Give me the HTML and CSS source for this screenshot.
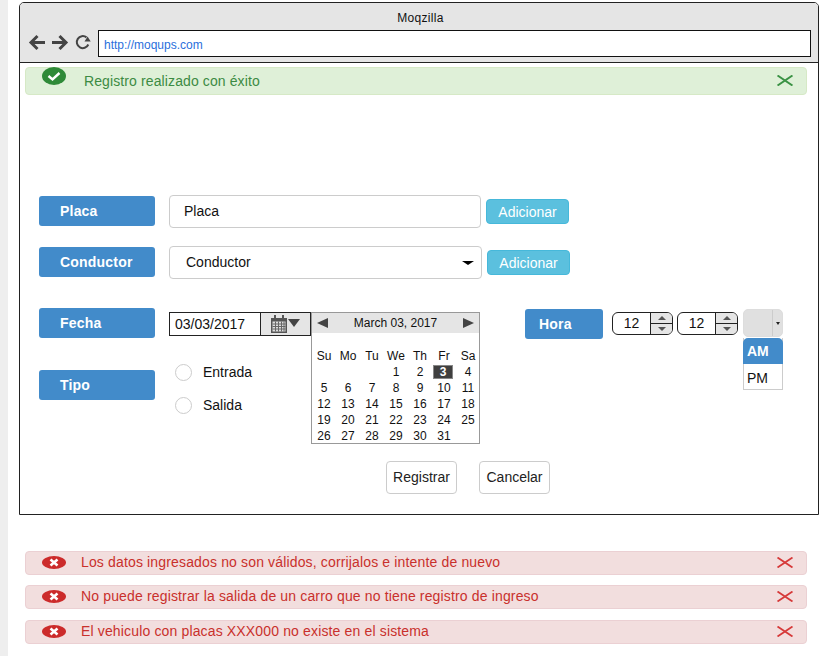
FILE: index.html
```html
<!DOCTYPE html>
<html lang="en">

<head>
    <meta charset="UTF-8">
    <meta name="viewport" content="width=device-width, initial-scale=1.0">
    <title>Moqzilla</title>
    <link rel="stylesheet" href="styles.css">
</head>

<body>
    <div class="window">
        <div class="chrome">
            <div class="chrome-title">Moqzilla</div>
            <div class="chrome-nav">
                <svg class="nav-icon" width="17" height="17" viewBox="0 0 17 17"><path d="M17 8.5H3M9.5 2L3 8.5 9.5 15" fill="none" stroke="#444" stroke-width="3"/></svg>
                <svg class="nav-icon" width="17" height="17" viewBox="0 0 17 17"><path d="M0 8.5h14M7.5 2L14 8.5 7.5 15" fill="none" stroke="#444" stroke-width="3"/></svg>
                <svg class="nav-icon nav-reload" width="16" height="16" viewBox="0 0 16 16"><path d="M13.3 10.5A6 6 0 1 1 11.5 3.4" fill="none" stroke="#444" stroke-width="2"/><path d="M9.5 7.5h6.2L12.6 2.6z" fill="#444"/></svg>
                <div class="address">http://moqups.com</div>
            </div>
        </div>

        <div class="alert alert-success alert-top">
            <svg class="alert-icon icon-up" width="24" height="18" viewBox="0 0 24 18"><ellipse cx="12" cy="9" rx="12" ry="9" fill="#2f8a38"/><path d="M6.5 9l4 3.5 7-6.5" fill="none" stroke="#fff" stroke-width="2.4"/></svg>
            <span class="alert-text success-text">Registro realizado con éxito</span>
            <svg class="alert-close" width="16" height="11" viewBox="0 0 16 11"><path d="M0.5 0.5l15 10M15.5 0.5l-15 10" stroke="#3a9244" stroke-width="2"/></svg>
        </div>

        <div class="form-row row-placa">
            <div class="tag">Placa</div>
            <div class="field">Placa</div>
            <button class="btn-add">Adicionar</button>
        </div>
        <div class="form-row row-conductor">
            <div class="tag">Conductor</div>
            <div class="field field-select">Conductor<span class="caret"></span></div>
            <button class="btn-add">Adicionar</button>
        </div>

        <div class="schedule">
            <div class="schedule-left">
                <div class="fecha-row">
                    <div class="tag">Fecha</div>
                    <div class="date-input">
                        <span class="date-value">03/03/2017</span>
                        <span class="date-btn">
                            <svg width="16" height="18" viewBox="0 0 16 18"><path d="M0 3h16v15H0z" fill="#555"/><path d="M1.5 6.5h13v10h-13z" fill="#ddd"/><path d="M4 0v5M12 0v5" stroke="#555" stroke-width="2"/><path d="M1.5 9h13M1.5 11.5h13M1.5 14h13M4.5 6.5v10M7.5 6.5v10M10.5 6.5v10M13 6.5v10" stroke="#666"/></svg>
                            <span class="tri-down"></span>
                        </span>
                    </div>
                </div>
                <div class="tipo-row">
                    <div class="tag tipo-tag">Tipo</div>
                    <div class="radios">
                        <label class="radio"><span class="radio-dot"></span>Entrada</label>
                        <label class="radio"><span class="radio-dot"></span>Salida</label>
                    </div>
                </div>
            </div>

            <div class="calendar">
                <div class="cal-head">
                    <span class="cal-prev"></span>
                    <span>March 03, 2017</span>
                    <span class="cal-next"></span>
                </div>
                <div class="cal-grid">
                    <span>Su</span><span>Mo</span><span>Tu</span><span>We</span><span>Th</span><span>Fr</span><span>Sa</span>
                    <span></span><span></span><span></span><span>1</span><span>2</span><span class="cal-today">3</span><span>4</span>
                    <span>5</span><span>6</span><span>7</span><span>8</span><span>9</span><span>10</span><span>11</span>
                    <span>12</span><span>13</span><span>14</span><span>15</span><span>16</span><span>17</span><span>18</span>
                    <span>19</span><span>20</span><span>21</span><span>22</span><span>23</span><span>24</span><span>25</span>
                    <span>26</span><span>27</span><span>28</span><span>29</span><span>30</span><span>31</span><span></span>
                </div>
            </div>

            <div class="hora">
                <div class="tag tag-hora">Hora</div>
                <div class="spinner">
                    <span class="spin-value">12</span>
                    <span class="spin-btns"><span class="spin-up"><i class="tri-small-up"></i></span><span class="spin-down"><i class="tri-small-down"></i></span></span>
                </div>
                <div class="spinner">
                    <span class="spin-value">12</span>
                    <span class="spin-btns"><span class="spin-up"><i class="tri-small-up"></i></span><span class="spin-down"><i class="tri-small-down"></i></span></span>
                </div>
                <div class="ampm">
                    <div class="ampm-box"><span class="ampm-arrow"><i></i></span></div>
                    <div class="ampm-list">
                        <div class="ampm-on">AM</div>
                        <div class="ampm-off">PM</div>
                    </div>
                </div>
            </div>
        </div>

        <div class="actions">
            <button class="btn-plain">Registrar</button>
            <button class="btn-plain">Cancelar</button>
        </div>
    </div>

    <div class="errors">
        <div class="alert alert-error">
            <svg class="alert-icon" width="24" height="13" viewBox="0 0 24 13"><ellipse cx="12" cy="6.5" rx="12" ry="6.5" fill="#cc2b2b"/><path d="M8.5 3.5l7 6M15.5 3.5l-7 6" stroke="#fff" stroke-width="2.6"/></svg>
            <span class="alert-text error-text">Los datos ingresados no son válidos, corrijalos e intente de nuevo</span>
            <svg class="alert-close" width="16" height="11" viewBox="0 0 16 11"><path d="M0.5 0.5l15 10M15.5 0.5l-15 10" stroke="#d63a3a" stroke-width="1.8"/></svg>
        </div>
        <div class="alert alert-error">
            <svg class="alert-icon" width="24" height="13" viewBox="0 0 24 13"><ellipse cx="12" cy="6.5" rx="12" ry="6.5" fill="#cc2b2b"/><path d="M8.5 3.5l7 6M15.5 3.5l-7 6" stroke="#fff" stroke-width="2.6"/></svg>
            <span class="alert-text error-text">No puede registrar la salida de un carro que no tiene registro de ingreso</span>
            <svg class="alert-close" width="16" height="11" viewBox="0 0 16 11"><path d="M0.5 0.5l15 10M15.5 0.5l-15 10" stroke="#d63a3a" stroke-width="1.8"/></svg>
        </div>
        <div class="alert alert-error alert-last">
            <svg class="alert-icon" width="24" height="13" viewBox="0 0 24 13"><ellipse cx="12" cy="6.5" rx="12" ry="6.5" fill="#cc2b2b"/><path d="M8.5 3.5l7 6M15.5 3.5l-7 6" stroke="#fff" stroke-width="2.6"/></svg>
            <span class="alert-text error-text">El vehiculo con placas XXX000 no existe en el sistema</span>
            <svg class="alert-close" width="16" height="11" viewBox="0 0 16 11"><path d="M0.5 0.5l15 10M15.5 0.5l-15 10" stroke="#d63a3a" stroke-width="1.8"/></svg>
        </div>
    </div>
</body>

</html>
```

FILE: styles.css
```css
/* Resetting Default Styles */
* {
    margin: 0;
    padding: 0;
    box-sizing: border-box;
}

body {
    font-family: "Liberation Sans", Arial, sans-serif;
    font-size: 14px;
    color: #111;
    background: #fff;
    border-left: 8px solid #eee;
    padding: 2px 0 0 11px;
    width: 827px;
    height: 656px;
    overflow: hidden;
}

/* Browser window */
.window {
    width: 800px;
    height: 513px;
    border: 1px solid #222;
    border-radius: 5px 5px 0 0;
}

.chrome {
    height: 60px;
    background: #e5e5e5;
    border-bottom: 1px solid #222;
    border-radius: 4px 4px 0 0;
    padding-top: 8px;
}

.chrome-title {
    font-size: 12px;
    letter-spacing: 0.3px;
    line-height: 14px;
    text-align: center;
    padding-left: 3px;
}

.chrome-nav {
    display: flex;
    align-items: center;
    margin-top: 5px;
    padding: 0 7px 0 8px;
}

.nav-icon {
    margin-right: 7px;
    margin-top: -2px;
    flex-shrink: 0;
}

.nav-reload {
    margin-left: -1px;
    margin-right: 8px;
    margin-top: -3px;
}

.address {
    flex: 1;
    height: 27px;
    background: #fff;
    border: 1px solid #111;
    color: #2a6fdc;
    font-size: 12px;
    line-height: 28px;
    padding-left: 5px;
    margin-left: -1px;
}

/* Alerts */
.alert {
    display: flex;
    align-items: center;
    width: 782px;
    height: 24px;
    border-radius: 4px;
}

.alert-top {
    height: 28px;
    margin: 4px 0 0 5px;
    padding-bottom: 2px;
}

.alert-success {
    background: #dff0d8;
    border: 1px solid #d6e9c6;
}

.alert-error {
    background: #f2dede;
    border: 1px solid #ebd0d3;
    padding-bottom: 1px;
}

.alert-icon {
    margin-left: 16px;
    flex-shrink: 0;
}

.icon-up {
    margin-top: -8px;
}

.alert-text {
    flex: 1;
    margin-left: 15px;
    letter-spacing: 0.11px;
}

.success-text {
    margin-left: 18px;
    margin-top: 2px;
    color: #3c8b43;
}

.error-text {
    margin-bottom: 1px;
    color: #c9302c;
    letter-spacing: 0.15px;
}

.alert-close {
    margin-right: 13px;
    flex-shrink: 0;
}

/* Form rows */
.form-row {
    display: flex;
    align-items: center;
    padding-left: 19px;
}

.row-placa {
    margin-top: 100px;
}

.row-conductor {
    margin-top: 18px;
}

.form-row .tag {
    margin-bottom: 1px;
}

.tag {
    width: 116px;
    height: 30px;
    padding-left: 21px;
    background: #428bca;
    border-radius: 3px;
    color: #fff;
    font-weight: bold;
    letter-spacing: 0.2px;
    line-height: 30px;
    flex-shrink: 0;
}

.field {
    width: 312px;
    height: 33px;
    margin-left: 14px;
    padding-left: 14px;
    background: #fff;
    border: 1px solid #ccc;
    border-radius: 4px;
    line-height: 31px;
}

.field-select {
    position: relative;
    width: 313px;
    padding-left: 16px;
}

.caret {
    position: absolute;
    right: 7px;
    top: 14px;
    border-left: 6px solid transparent;
    border-right: 6px solid transparent;
    border-top: 4px solid #000;
}

.btn-add {
    width: 83px;
    height: 25px;
    margin-left: 5px;
    background: #5bc0de;
    border: 1px solid #46b8da;
    border-radius: 4px;
    color: #fff;
    font-family: inherit;
    font-size: 14px;
}

/* Date, type and time section */
.schedule {
    display: flex;
    align-items: flex-start;
    margin-top: 29px;
    padding-left: 19px;
}

.schedule-left {
    width: 272px;
}

.fecha-row {
    display: flex;
    align-items: flex-start;
}

.date-input {
    display: flex;
    width: 142px;
    height: 24px;
    margin: 4px 0 0 14px;
    border: 1px solid #222;
}

.date-value {
    width: 90px;
    padding-left: 5px;
    line-height: 22px;
}

.date-btn {
    display: flex;
    align-items: center;
    flex: 1;
    gap: 1px;
    padding-left: 10px;
    background: #e5e5e5;
    border-left: 1px solid #222;
}

.date-btn svg {
    margin-top: -1px;
}

.tri-down {
    margin-top: -2px;
    border-left: 6px solid transparent;
    border-right: 6px solid transparent;
    border-top: 8px solid #444;
}

.tipo-row {
    display: flex;
    align-items: flex-start;
    margin-top: 26px;
}

.tipo-tag {
    margin-top: 6px;
}

.radios {
    display: flex;
    flex-direction: column;
    gap: 16px;
    margin-left: 20px;
}

.radio {
    display: flex;
    align-items: center;
    height: 17px;
    line-height: 17px;
}

.radio-dot {
    width: 17px;
    height: 17px;
    margin-right: 11px;
    background: #fff;
    border: 1px solid #ccc;
    border-radius: 50%;
}

/* Calendar popup */
.calendar {
    width: 169px;
    height: 132px;
    margin-top: 4px;
    background: #fff;
    border: 1px solid #999;
}

.cal-head {
    display: flex;
    align-items: center;
    justify-content: space-between;
    height: 20px;
    padding: 0 5px;
    background: #e5e5e5;
    font-size: 12px;
}

.cal-prev {
    border-top: 5px solid transparent;
    border-bottom: 5px solid transparent;
    border-right: 11px solid #444;
}

.cal-next {
    border-top: 5px solid transparent;
    border-bottom: 5px solid transparent;
    border-left: 11px solid #444;
}

.cal-grid {
    display: grid;
    grid-template-columns: repeat(7, 24px);
    grid-auto-rows: 16px;
    margin-top: 15px;
    font-size: 12px;
    line-height: 16px;
    text-align: center;
}

.cal-today {
    height: 14px;
    margin: 1px 3px 1px 1px;
    background: #3f3f3f;
    border: 1px solid #888;
    color: #fff;
    font-weight: bold;
    line-height: 12px;
}

/* Time controls */
.hora {
    display: flex;
    align-items: flex-start;
    margin-left: 45px;
}

.tag-hora {
    width: 78px;
    margin-top: 1px;
    padding-left: 14px;
}

.spinner {
    display: flex;
    width: 61px;
    height: 23px;
    margin: 4px 0 0 9px;
    border: 1px solid #222;
    border-radius: 6px;
    overflow: hidden;
}

.spinner + .spinner {
    margin-left: 4px;
}

.spin-value {
    flex: 1;
    line-height: 21px;
    text-align: center;
}

.spin-btns {
    display: flex;
    flex-direction: column;
    width: 22px;
    border-left: 1px solid #222;
}

.spin-up,
.spin-down {
    display: flex;
    align-items: center;
    justify-content: center;
    flex: 1;
    background: #e5e5e5;
}

.spin-up {
    border-bottom: 1px solid #222;
}

.tri-small-up {
    border-left: 4px solid transparent;
    border-right: 4px solid transparent;
    border-bottom: 4px solid #555;
}

.tri-small-down {
    border-left: 4px solid transparent;
    border-right: 4px solid transparent;
    border-top: 4px solid #555;
}

.ampm {
    width: 40px;
    margin-left: 5px;
    margin-top: 1px;
}

.ampm-box {
    display: flex;
    justify-content: flex-end;
    height: 28px;
    background: #e0e0e0;
    border: 1px solid #ddd;
    border-radius: 5px;
}

.ampm-arrow {
    display: flex;
    align-items: center;
    justify-content: center;
    width: 10px;
    border-left: 1px solid #ccc;
}

.ampm-arrow i {
    border-left: 2px solid transparent;
    border-right: 2px solid transparent;
    border-top: 3px solid #222;
}

.ampm-list {
    margin-top: 1px;
    border: 1px solid #ccc;
    border-top: none;
    background: #fff;
}

.ampm-on {
    height: 26px;
    margin: 0 -1px;
    padding-left: 4px;
    background: #428bca;
    border-radius: 5px 5px 0 0;
    color: #fff;
    font-weight: bold;
    line-height: 27px;
}

.ampm-off {
    height: 25px;
    padding-left: 3px;
    line-height: 28px;
}

/* Bottom buttons */
.actions {
    display: flex;
    gap: 22px;
    margin-top: 17px;
    padding-left: 366px;
}

.btn-plain {
    width: 71px;
    height: 33px;
    padding-bottom: 2px;
    background: #fff;
    border: 1px solid #ccc;
    border-radius: 4px;
    color: #222;
    font-family: inherit;
    font-size: 14px;
}

/* Error messages below the window */
.errors {
    display: flex;
    flex-direction: column;
    gap: 10px;
    margin: 36px 0 0 6px;
}

.alert-last {
    margin-top: 1px;
}
```
